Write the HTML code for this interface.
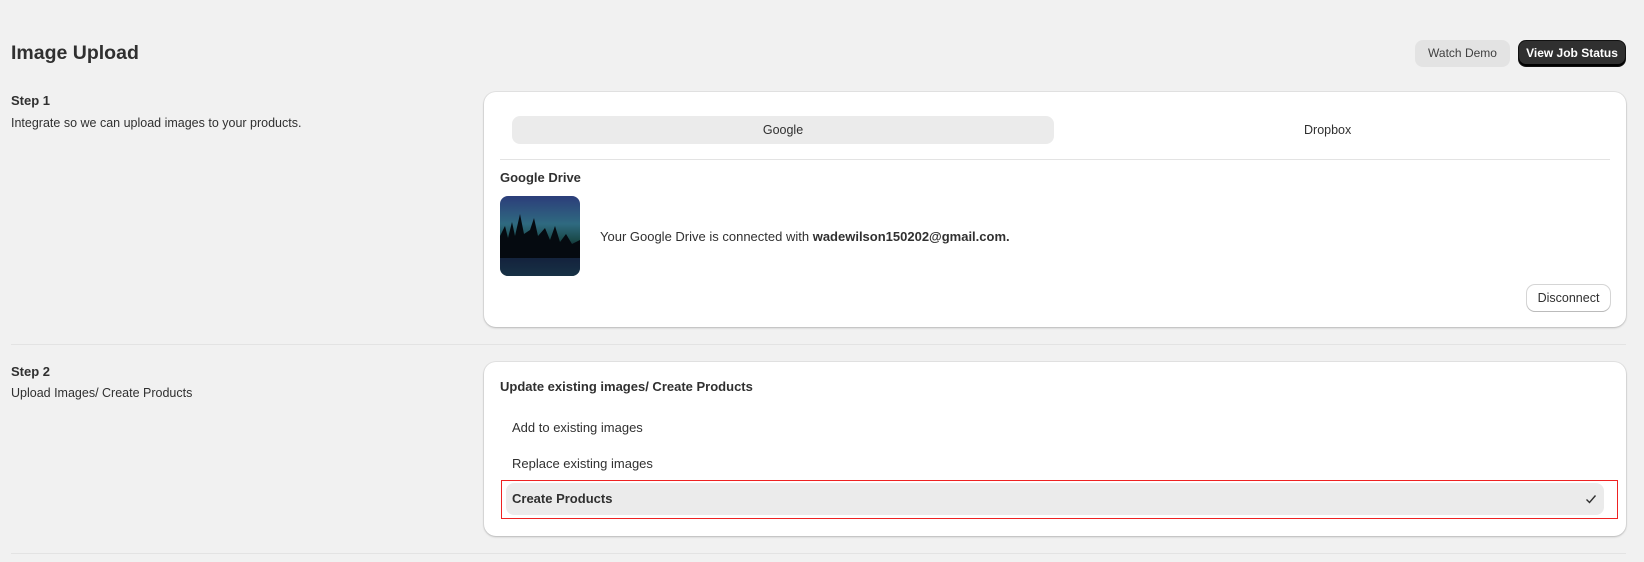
<!DOCTYPE html>
<html><head><style>
*{box-sizing:border-box;margin:0;padding:0}
body{width:1644px;height:562px;background:#f1f1f1;font-family:"Liberation Sans",sans-serif;color:#303030;font-size:13px;position:relative;overflow:hidden}
.a{position:absolute;white-space:nowrap}
.card{position:absolute;background:#fff;border-radius:12px;box-shadow:0 1px 2px rgba(0,0,0,.2),0 0 0 1px rgba(0,0,0,.05)}
b{font-weight:700}
</style></head><body>
<div class="a" style="left:11px;top:42px;font-size:19.5px;font-weight:700">Image Upload</div>
<div class="a" style="left:1415px;top:40px;width:95px;height:27px;background:#e3e3e3;border-radius:8px;text-align:center;line-height:27px;font-size:12px;color:#404040">Watch Demo</div>
<div class="a" style="left:1518px;top:40px;width:108px;height:27px;background:#303030;border:1px solid #111;border-radius:8px;text-align:center;line-height:25px;font-size:12px;color:#fff;font-weight:700;box-shadow:inset 0 -2px 0 #000">View Job Status</div>

<div class="a" style="left:11px;top:93px;font-weight:700">Step 1</div>
<div class="a" style="left:11px;top:116px;font-size:12.5px">Integrate so we can upload images to your products.</div>

<div class="card" style="left:484px;top:92px;width:1142px;height:235px"></div>
<div class="a" style="left:512px;top:116px;width:542px;height:28px;background:#ebebeb;border-radius:8px;text-align:center;line-height:28px;font-size:12.5px">Google</div>
<div class="a" style="left:1304px;top:123px;font-size:12.5px">Dropbox</div>
<div class="a" style="left:500px;top:159px;width:1110px;height:1px;background:#e3e3e3"></div>
<div class="a" style="left:500px;top:170px;font-weight:700">Google Drive</div>
<div class="a" style="left:500px;top:196px;width:80px;height:80px;border-radius:8px;overflow:hidden;background:linear-gradient(180deg,#2c3d7a 0%,#2f6a80 35%,#1a4a4a 55%,#0a1420 68%,#12183a 80%,#1c4650 100%)">
<svg width="80" height="80" viewBox="0 0 80 80"><path d="M0 62 L0 40 L5 30 L8 42 L12 26 L15 40 L20 18 L24 38 L30 34 L34 22 L38 40 L45 32 L50 44 L55 30 L60 46 L66 38 L72 48 L80 44 L80 62Z" fill="#050a10"/><rect y="62" width="80" height="18" fill="#152a40" opacity=".7"/></svg></div>
<div class="a" style="left:600px;top:229px">Your Google Drive is connected with <b>wadewilson150202@gmail.com.</b></div>
<div class="a" style="left:1527px;top:285px;width:83px;height:26px;border-radius:8px;background:#fff;box-shadow:0 1px 0 #bbb,0 0 0 1px #d5d5d5;text-align:center;line-height:26px;font-size:12.5px">Disconnect</div>

<div class="a" style="left:11px;top:344px;width:1615px;height:1px;background:#e3e3e3"></div>

<div class="a" style="left:11px;top:364px;font-weight:700">Step 2</div>
<div class="a" style="left:11px;top:386px;font-size:12.5px">Upload Images/ Create Products</div>

<div class="card" style="left:484px;top:362px;width:1142px;height:174px"></div>
<div class="a" style="left:500px;top:379px;font-weight:700">Update existing images/ Create Products</div>
<div class="a" style="left:512px;top:420px;font-size:13px">Add to existing images</div>
<div class="a" style="left:512px;top:456px;font-size:13px">Replace existing images</div>
<div class="a" style="left:501px;top:480px;width:1117px;height:39px;border:1.5px solid #e22"></div>
<div class="a" style="left:506px;top:483px;width:1098px;height:32px;background:#ebebeb;border-radius:8px"></div>
<div class="a" style="left:512px;top:491px;font-weight:700;font-size:13px">Create Products</div>
<svg class="a" style="left:1584px;top:492px" width="14" height="14" viewBox="0 0 14 14"><path d="M2.5 7.5 L5.5 10.5 L11.5 3.5" fill="none" stroke="#303030" stroke-width="1.4"/></svg>

<div class="a" style="left:11px;top:553px;width:1615px;height:1px;background:#e3e3e3"></div>
</body></html>
